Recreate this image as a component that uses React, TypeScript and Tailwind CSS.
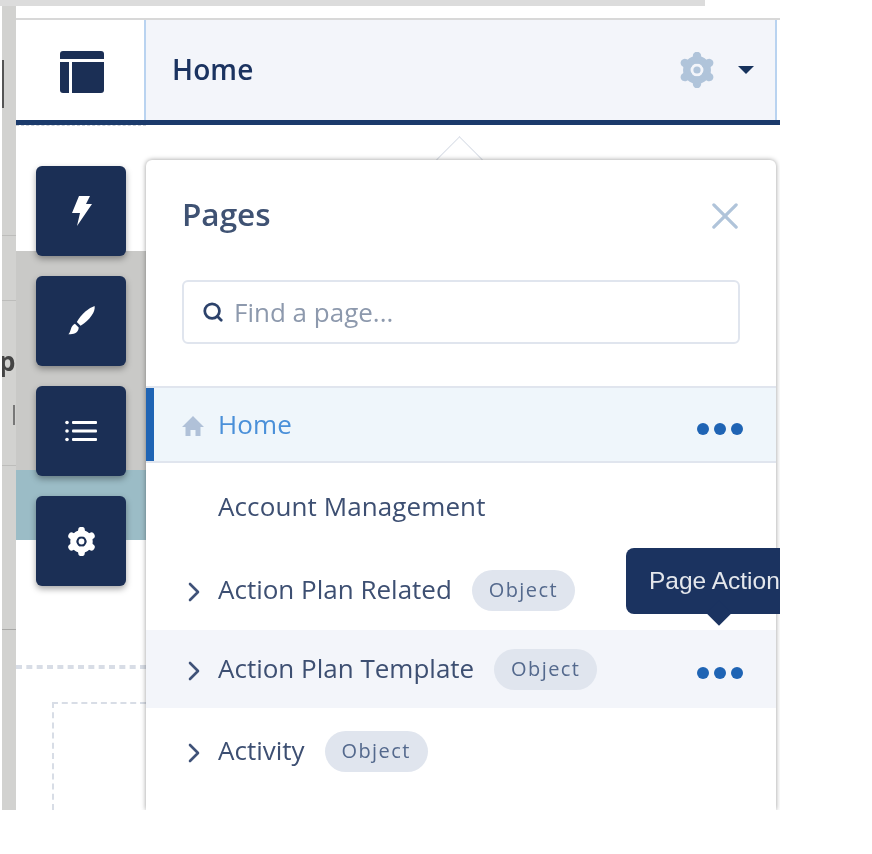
import { Search } from 'lucide-react';

const font = { fontFamily: '"Open Sans", "Noto Sans", sans-serif' };

function Gear({ className, dot }: { className: string; dot?: boolean }) {
  const teeth = [0, 60, 120, 180, 240, 300];
  return (
    <svg viewBox="0 0 24 24" className={className} fill="none" stroke="currentColor">
      <circle cx="12" cy="12" r="6.8" strokeWidth="5" />
      {teeth.map((deg) => (
        <line key={deg} x1="12" y1="5" x2="12" y2="2.6" strokeWidth="5.6" strokeLinecap="round" transform={`rotate(${deg} 12 12)`} />
      ))}
      {dot && <circle cx="12" cy="12" r="2.4" fill="currentColor" stroke="none" />}
    </svg>
  );
}

function TemplateIcon() {
  return (
    <svg viewBox="0 0 44 42" className="ml-[4px] mt-[4px] h-[42px] w-[44px] text-[#1b2f55]" fill="currentColor">
      <path d="M3 0h38a3 3 0 0 1 3 3v5H0V3a3 3 0 0 1 3-3z" />
      <path d="M0 11h9v31H3a3 3 0 0 1-3-3z" />
      <path d="M12 11h32v28a3 3 0 0 1-3 3H12z" />
    </svg>
  );
}

function BoltIcon() {
  return (
    <svg viewBox="0 0 21 30" className="h-[30px] w-[21px] text-white" fill="currentColor">
      <path d="M8 0h11l-4 8h6L6 30l3-13H1z" strokeLinejoin="round" />
    </svg>
  );
}

function BrushIcon() {
  return (
    <svg viewBox="0 0 30 32" className="h-[30px] w-[29px] text-white" fill="currentColor">
      <path d="M29 0c1 6-5 15-15 21l-4-4C15 8 23 2 29 0z" />
      <path d="M8 19l4 4c0 5-5 8-11 7 3-2 2-9 7-11z" />
    </svg>
  );
}

function ListIcon() {
  return (
    <svg viewBox="0 0 32 22" className="h-[22px] w-[32px] text-white" fill="currentColor">
      <circle cx="2" cy="2.5" r="1.8" />
      <circle cx="2" cy="11" r="1.8" />
      <circle cx="2" cy="19.5" r="1.8" />
      <rect x="7" y="1" width="25" height="3" rx="1" />
      <rect x="7" y="9.5" width="25" height="3" rx="1" />
      <rect x="7" y="18" width="25" height="3" rx="1" />
    </svg>
  );
}

function HomeIcon() {
  return (
    <svg viewBox="0 0 22 22" className="mt-[3px] h-[22px] w-[22px] text-[#b0c1d8]" fill="currentColor">
      <path d="M11 1L0 12h3.5v9h5v-6h5v6h5v-9H22z" />
    </svg>
  );
}

function Chevron() {
  return (
    <svg viewBox="0 0 12 20" className="mt-[3px] h-[20px] w-[12px] text-[#3f5278]" fill="none" stroke="currentColor" strokeWidth="2.6" strokeLinecap="round" strokeLinejoin="round">
      <path d="M2 2l8 8-8 8" />
    </svg>
  );
}

function Dots() {
  return (
    <div className="mt-2 flex gap-[5px]">
      <div className="h-[12px] w-[12px] rounded-full bg-[#1f64b4]" />
      <div className="h-[12px] w-[12px] rounded-full bg-[#1f64b4]" />
      <div className="h-[12px] w-[12px] rounded-full bg-[#1f64b4]" />
    </div>
  );
}

function Badge() {
  return (
    <span className="ml-[20px] flex h-[41px] w-[103px] items-center justify-center rounded-full bg-[#e0e5ee] pb-[1px] text-[20px] tracking-[1.4px] text-[#54698d]">
      Object
    </span>
  );
}

function ObjectRow({ label, hover, first }: { label: string; hover?: boolean; first?: boolean }) {
  return (
    <div className={`flex h-[78px] items-center pl-[42px] pr-[33px] ${hover ? 'bg-[#f3f5fa]' : ''} ${first ? 'pb-[2px]' : ''}`}>
      <div className="w-[30px]">
        <Chevron />
      </div>
      <span className="pb-[2px] text-[26px] text-[#3d4f72]">{label}</span>
      <Badge />
      <div className="flex-1" />
      {hover && <Dots />}
    </div>
  );
}

function ToolButton({ children }: { children: React.ReactNode }) {
  return (
    <div className="flex h-[90px] w-[90px] items-center justify-center rounded-md bg-[#1b2f55] shadow-[0_3px_6px_rgba(0,0,0,0.35)]">
      {children}
    </div>
  );
}

export default function App() {
  return (
    <div className="h-[854px] w-[872px] overflow-hidden bg-white" style={font}>
      <div className="h-[810px] w-[780px] overflow-hidden blur-[0.7px]">
        {/* strip of the page behind, cut off at the top */}
        <div className="h-[6px] w-[705px] bg-[#dcdcdc]" />

        <div className="flex h-[804px]">
          {/* left edge of the page behind */}
          <div className="ml-[2px] flex w-[14px] flex-col overflow-hidden bg-[#d2d2d0]">
            <div className="h-[54px]" />
            <div className="h-[48px] w-[2px] bg-[#555]" />
            <div className="h-[127px]" />
            <div className="h-px bg-[#bdbdbb]" />
            <div className="h-[64px]" />
            <div className="h-px bg-[#bdbdbb]" />
            <div className="h-[52px]" />
            <div className="-ml-[3px] h-[24px] text-[26px] font-bold leading-[16px] text-[#444]">p</div>
            <div className="h-[28px]" />
            <div className="ml-[11px] h-[20px] w-[2px] bg-[#777]" />
            <div className="h-[40px]" />
            <div className="h-px bg-[#bdbdbb]" />
            <div className="h-[163px]" />
            <div className="h-px bg-[#a9a9a7]" />
          </div>

          <div className="flex w-[764px] flex-col bg-white">
            <div className="h-[12px]" />
            <div className="h-[2px] bg-[#d8d8d8]" />
            {/* header bar */}
            <div className="flex h-[100px]">
              <div className="flex w-[128px] items-center justify-center bg-white">
                <TemplateIcon />
              </div>
              <div className="flex flex-1 items-center border-x-[2px] border-[#b9d3f0] bg-[#f3f5fa] pl-[26px] pr-[21px]">
                <span className="pb-[2px] text-[28px] font-semibold tracking-[0.1px] text-[#1b3360]">Home</span>
                <div className="flex-1" />
                <Gear className="h-[36px] w-[36px] text-[#b0c4da]" dot />
                <div className="ml-[23px] h-0 w-0 border-x-[8px] border-t-[8px] border-x-transparent border-t-[#16325c]" />
              </div>
              <div className="w-[3px]" />
            </div>
            <div className="h-[5px] bg-[#1b3a6b]" />

            <div className="relative flex flex-1">
              {/* canvas behind the tool buttons */}
              <div className="flex w-[130px] flex-col border-t border-dashed border-[#c9ced6]">
                <div className="h-[125px]" />
                <div className="h-[219px] bg-[#c9c9c7]" />
                <div className="h-[70px] bg-[#9bbcc6]" />
                <div className="h-[125px]" />
                <div className="h-[4px] border-y-[2px] border-dashed border-[#d8dde6]" />
                <div className="h-[33px]" />
                <div className="ml-[36px] flex-1 border-l-[2px] border-t-[2px] border-dashed border-[#d8dde6]" />
              </div>

              {/* floating tool buttons */}
              <div className="absolute left-[20px] top-[41px] flex flex-col gap-[20px]">
                <ToolButton>
                  <BoltIcon />
                </ToolButton>
                <ToolButton>
                  <BrushIcon />
                </ToolButton>
                <ToolButton>
                  <ListIcon />
                </ToolButton>
                <ToolButton>
                  <Gear className="h-[29px] w-[29px] text-white" dot />
                </ToolButton>
              </div>

              <div className="relative mt-[35px] w-[630px] self-stretch">
                {/* popover notch */}
                <div className="absolute left-[297px] top-[-17px] h-[33px] w-[33px] rotate-45 border-l border-t border-[#d8dde6] bg-white" />

                <div className="relative h-full rounded-t-md bg-white shadow-[0_0_5px_rgba(0,0,0,0.4)]">
                  <div className="flex items-center justify-between pl-[36px] pr-[38px] pt-[32px]">
                    <span className="text-[31.5px] font-semibold leading-[44px] text-[#3f5273]">Pages</span>
                    <svg viewBox="0 0 28 28" className="mt-1 h-[26px] w-[26px] text-[#b0c4da]" fill="none" stroke="currentColor" strokeWidth="3.5" strokeLinecap="round">
                      <path d="M2 2l24 24M26 2L2 26" />
                    </svg>
                  </div>

                  <div className="mx-[36px] mt-[44px] flex h-[64px] items-center rounded-md border-2 border-[#e0e5ee] pl-[18px]">
                    <Search className="h-[22px] w-[22px] text-[#2c426b]" strokeWidth={3} />
                    <span className="ml-[10px] text-[26px] text-[#8d99ad]">Find a page...</span>
                  </div>

                  <div className="mt-[42px] flex h-[77px] items-center border-y-2 border-[#e0e5ee] bg-[#eff6fb] pl-[36px] pr-[33px] shadow-[inset_8px_0_0_#1f64b4]">
                    <HomeIcon />
                    <span className="ml-[14px] text-[26px] tracking-[0.1px] text-[#4a90d9]">Home</span>
                    <div className="flex-1" />
                    <Dots />
                  </div>

                  <div className="flex h-[86px] items-center pl-[72px]">
                    <span className="text-[26px] tracking-[0.1px] text-[#3d4f72]">Account Management</span>
                  </div>

                  <div className="mt-[3px]">
                    <ObjectRow label="Action Plan Related" first />
                    <ObjectRow label="Action Plan Template" hover />
                    <div className="h-[4px]" />
                    <ObjectRow label="Activity" />
                  </div>
                </div>

                {/* tooltip over the list */}
                <div className="absolute left-[480px] top-[388px] flex h-[66px] w-[170px] items-center rounded-l-lg bg-[#1b3360] pl-[23px]" style={{ fontFamily: '"Liberation Sans", sans-serif' }}>
                  <span className="whitespace-nowrap text-[24.5px] text-[#e4e7ec]">Page Action</span>
                  <div className="absolute bottom-[-8px] left-[84px] h-[18px] w-[18px] rotate-45 bg-[#1b3360]" />
                </div>
              </div>
            </div>
          </div>
        </div>
      </div>
    </div>
  );
}
